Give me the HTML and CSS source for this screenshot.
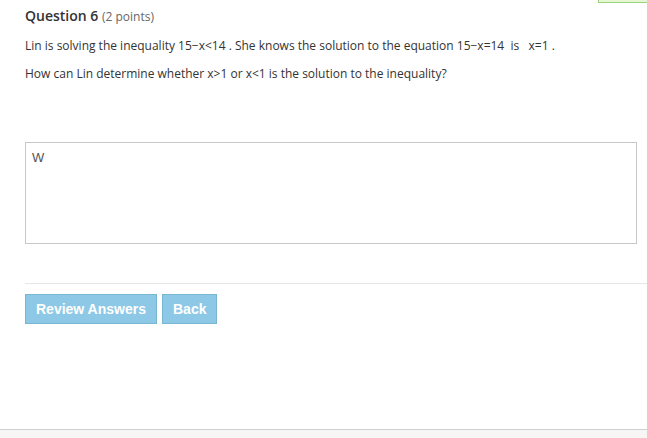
FILE: index.html
```html
<!DOCTYPE html>
<html lang="en">
<head>
  <meta charset="UTF-8" />
  <title>Question 6</title>
  <link rel="stylesheet" href="styles.css">
</head>
<body>
  <div class="status-tab"></div>
  <div class="page">
    <div class="question">
      <h2 class="question-title">Question 6 <span class="points">(2 points)</span></h2>
      <p>Lin is solving the inequality <span class="math">15−x&lt;14</span> . She knows the solution to the equation <span class="math">15−x=14</span>&nbsp; is &nbsp; <span class="math">x=1</span> .</p>
      <p>How can Lin determine whether x&gt;1 or x&lt;1 is the solution to the inequality?</p>
      <textarea class="answer">W</textarea>
    </div>
    <div class="actions">
      <button class="btn">Review Answers</button>
      <button class="btn">Back</button>
    </div>
  </div>
  <footer class="footer"></footer>
</body>
</html>
```

FILE: styles.css
```css
* { box-sizing: border-box; }
body {
  margin: 0;
  padding: 0;
  height: 438px;
  font-family: "Open Sans", sans-serif;
  background-color: #fff;
  color: #333;
  display: flex;
  flex-direction: column;
  overflow: hidden;
}
.status-tab {
  position: absolute;
  top: -1px;
  right: -2px;
  width: 51px;
  height: 4px;
  background: #e4f6d4;
  border: 1px solid #9bd37a;
}
.page {
  flex: 1;
  padding: 6px 0 0 25px;
}
.question {
  padding-right: 10px;
}
.question-title {
  margin: 0 0 12px;
  font-size: 14px;
  font-weight: 600;
  color: #333;
}
.points {
  font-size: 12px;
  font-weight: 400;
  color: #666;
}
.question p {
  margin: 0 0 11px;
  font-size: 12px;
  line-height: 17px;
}
.answer {
  display: block;
  width: 612px;
  height: 102px;
  margin-top: 60px;
  padding: 7px 6px;
  border: 1px solid #c8c8c8;
  font-family: "Liberation Sans", Arial, sans-serif;
  font-size: 13px;
  color: #555;
  resize: none;
}
.actions {
  margin-top: 39px;
  border-top: 1px solid #e6e6e6;
  padding-top: 10px;
  display: flex;
  gap: 5px;
}
.btn {
  height: 30px;
  padding: 0 10px;
  background-color: #8dc9e6;
  border: 1px solid #79b6d2;
  color: #fff;
  font-family: "Liberation Sans", Arial, sans-serif;
  font-size: 14px;
  font-weight: bold;
  cursor: pointer;
}
.footer {
  height: 9px;
  background: #f7f6f4;
  border-top: 1px solid #cfcfcf;
}
```
